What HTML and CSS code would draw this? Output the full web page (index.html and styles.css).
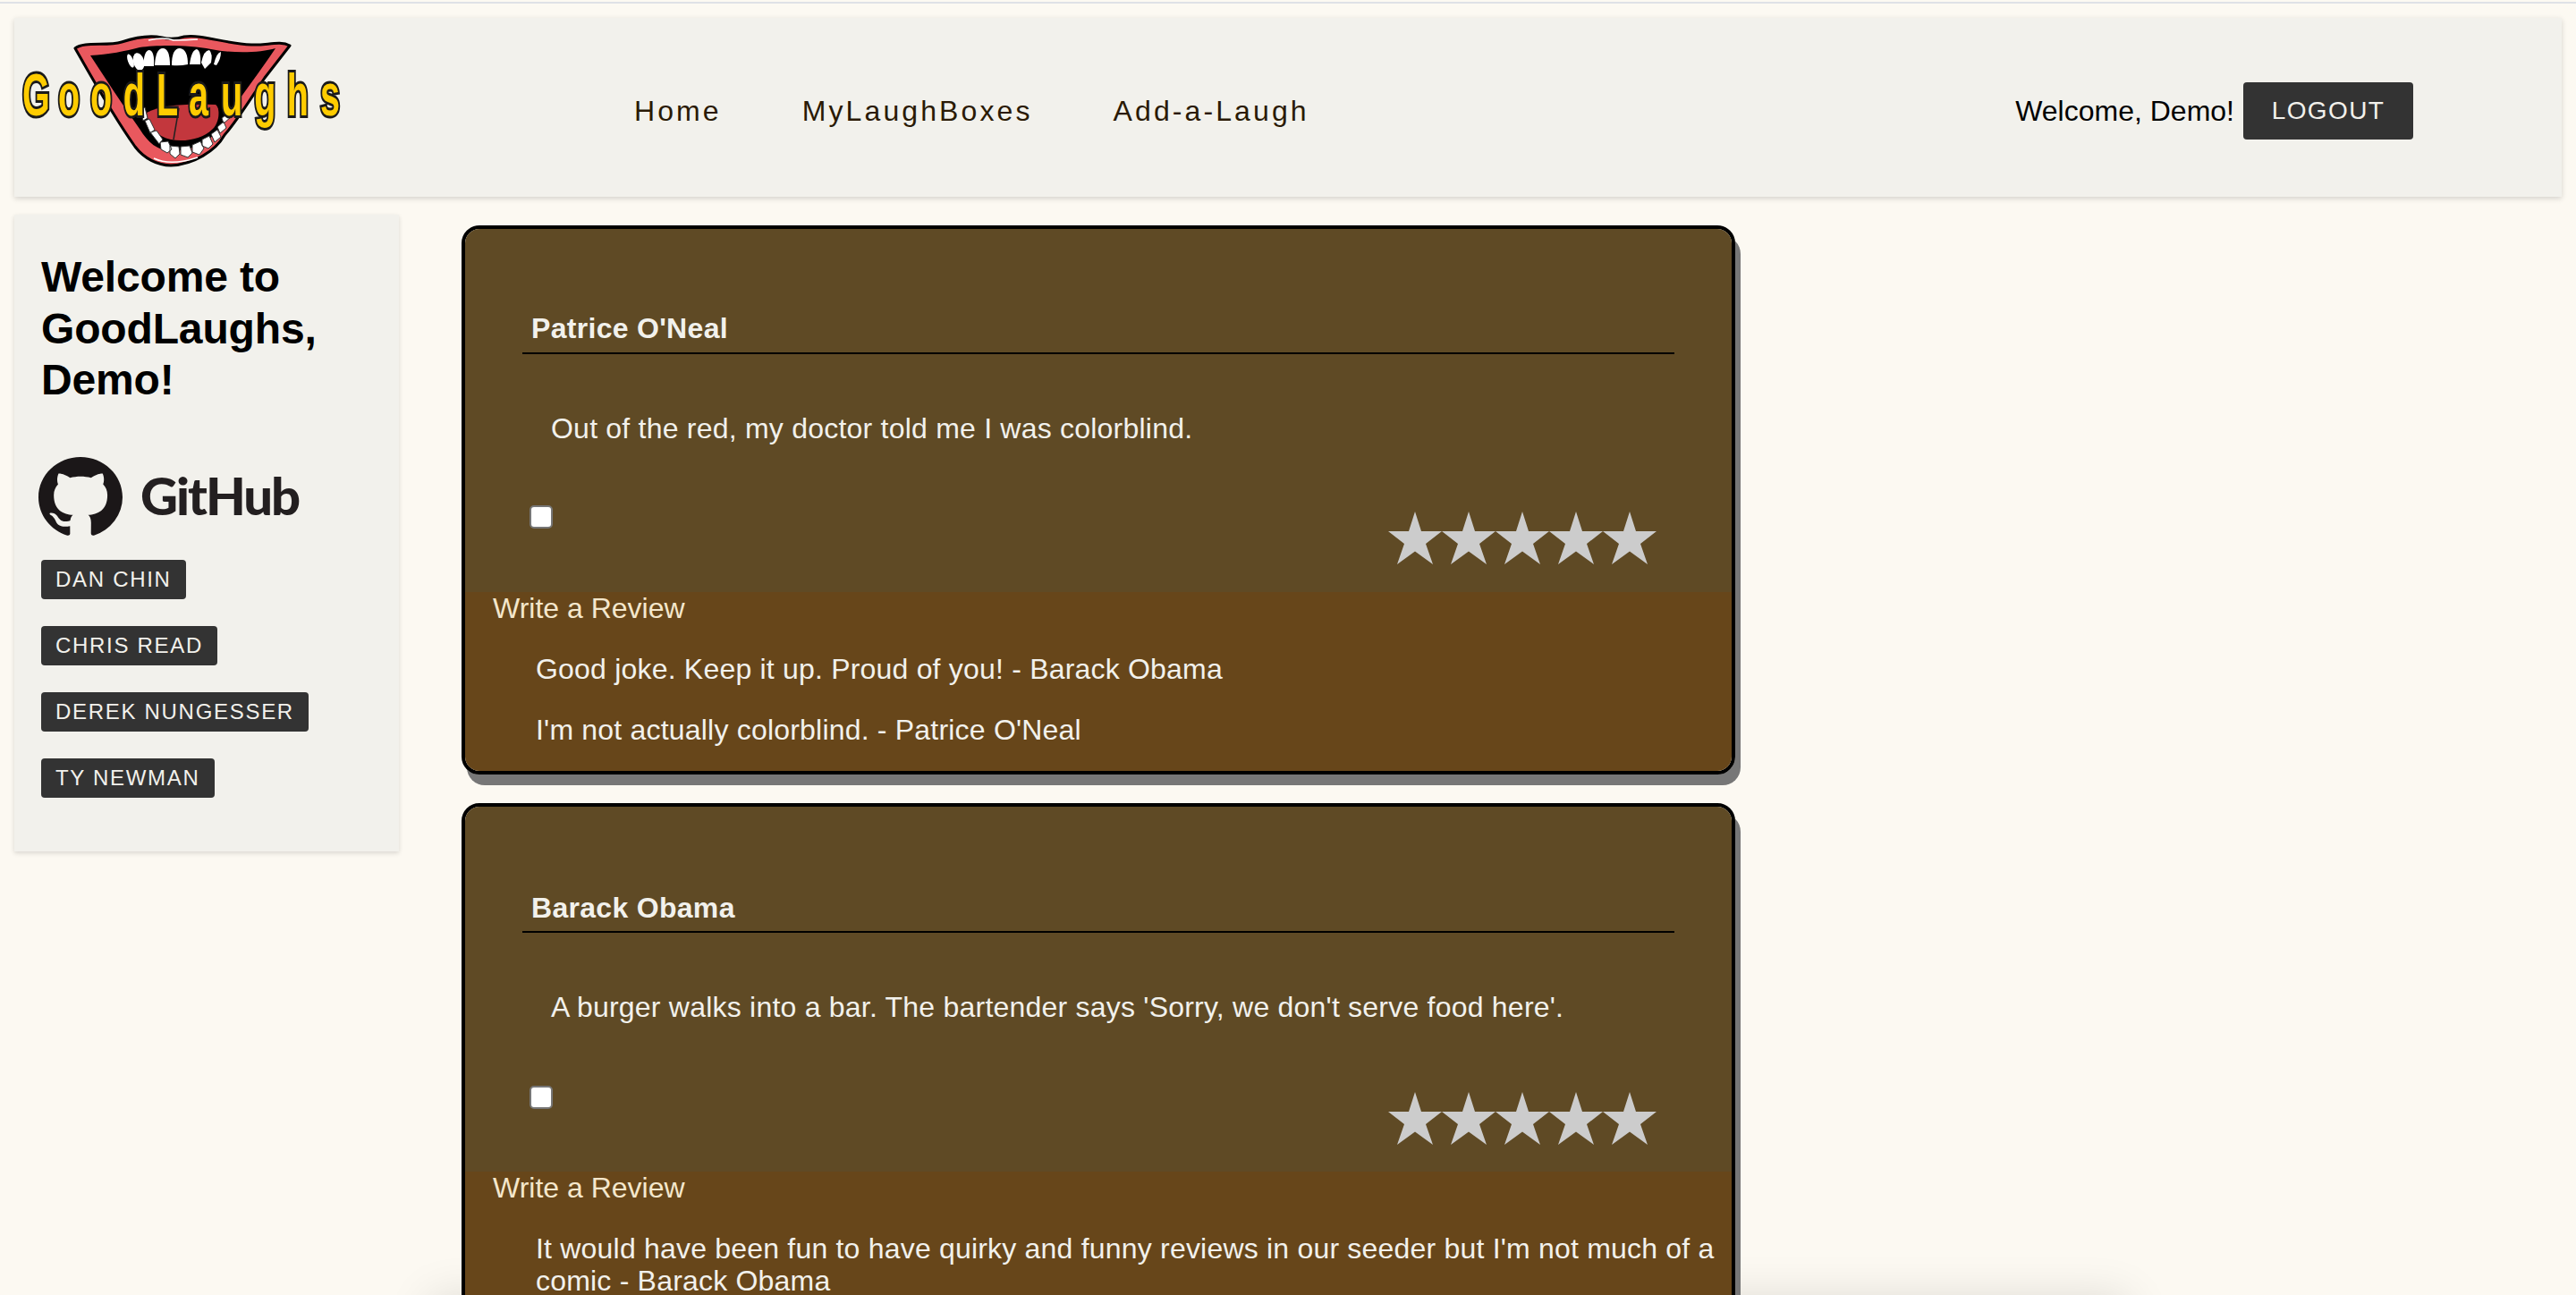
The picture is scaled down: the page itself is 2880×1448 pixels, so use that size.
FILE: index.html
```html
<!DOCTYPE html>
<html lang="en">
<head>
<meta charset="utf-8">
<title>GoodLaughs</title>
<link rel="stylesheet" href="styles.css">
</head>
<body>
<svg class="defs" width="0" height="0" aria-hidden="true">
  <defs>
    <polygon id="star" points="30,0 37,22 60,22 42,36 50,59 30,44.500 10,59 18,36 0,22 23,22"/>
  </defs>
</svg>
<div class="topline"></div>
<header class="navbar">
  <a class="logo" href="#">
    <svg class="logo-art" viewBox="0 0 400 180" width="400" height="180" aria-label="GoodLaughs">
      <path fill="#e9585e" stroke="#000" stroke-width="3" stroke-linejoin="round" d="M68 34C78 26 104 32 120 27C135 22 150 19 165 22Q177 25 190 21C210 18 235 29 265 30C282 31 297 25 308 31L280 67C265 89 250 114 235 131C225 149 200 164 175 165C160 165 145 157 135 144C110 109 85 64 68 34Z"/>
      <path fill="#000" d="M85 42C105 41 125 37 140 33C160 30 195 30 220 35C245 40 275 39 292 34C272 64 250 92 232 120C220 138 200 149 175 149C160 148 150 140 140 124C120 96 102 68 85 42Z"/>
      <g fill="#fff">
        <ellipse cx="130" cy="48" rx="3" ry="8" transform="rotate(-20 130 48)"/>
        <ellipse cx="139" cy="49" rx="6" ry="10" transform="rotate(-15 139 49)"/>
        <path d="M144 54Q145 36 151 36Q157 37 156 54Z"/>
        <path d="M157 53Q158 34 166 34Q174 34 174 53Z"/>
        <path d="M176 53Q176 34 185 34Q194 35 194 52Q185 54 176 53Z"/>
        <path d="M196 52Q198 36 204 35Q209 37 208 52Z"/>
        <path d="M209 50Q212 36 218 36Q222 40 220 50L213 57Z"/>
        <path d="M223 52Q226 39 231 38Q231 46 226 53Z"/>
      </g>
      <path fill="#c3373d" d="M148 106C165 97 190 96 225 97C230 100 230 116 222 124C210 136 190 139 175 136C160 133 150 122 148 106Z"/>
      <path fill="none" stroke="#222" stroke-width="1.500" d="M184 101L178 136"/>
      <path fill="#fff" stroke="#333" stroke-width="1" stroke-linejoin="round" d="M141 102l5-2 3 12-5 3zM146 115l5-2 6 12-5 4zM152 128l7-2 7 10-4 5zM163 139l9-1 4 9-5 4-7-4zM174 143l10 1 1 8-5 5-6-5zM186 144l10-1 3 8-5 5-8-3zM199 142l9-4 4 8-5 7-8-3zM210 136l8-4 4 9-5 5-7-3zM220 130l7-5 4 8-7 6zM227 122l7-6 3 7-7 6zM232 112l8-6 2 5-8 7zM238 104l7-4 1 5-8 5z"/>
      <path fill="none" stroke="#fff" stroke-width="1.500" d="M150 25Q168 21 178 25Q192 25 205 24M156 157Q175 166 205 156"/>
      <text class="logo-text" x="15 81.700 141.700 203 265 325 385 447 508 570" y="109" transform="scale(.6 1)">GoodLaughs</text>
    </svg>
  </a>
  <nav class="nav">
    <a class="nav-link" href="#">Home</a>
    <a class="nav-link" href="#">MyLaughBoxes</a>
    <a class="nav-link" href="#">Add-a-Laugh</a>
  </nav>
  <div class="account">
    <span class="welcome">Welcome, Demo!</span>
    <a class="btn btn-logout" href="#">LOGOUT</a>
  </div>
</header>
<div class="layout">
  <aside class="sidebar">
    <h2 class="sidebar-title">Welcome to GoodLaughs, Demo!</h2>
    <div class="github">
      <svg class="github-mark" viewBox="0 0 16 16" width="94" height="90" preserveAspectRatio="none"><path fill="#1b1718" d="M8 0C3.58 0 0 3.58 0 8c0 3.54 2.290 6.530 5.470 7.590.4.070.55-.17.55-.38 0-.19-.01-.82-.01-1.490-2.010.37-2.530-.49-2.690-.94-.09-.23-.48-.94-.82-1.130-.28-.15-.68-.52-.01-.53.63-.01 1.080.58 1.230.82.72 1.210 1.870.87 2.330.66.07-.52.28-.87.51-1.070-1.780-.2-3.640-.89-3.640-3.950 0-.87.31-1.590.82-2.150-.08-.2-.36-1.020.08-2.120 0 0 .67-.21 2.200.82.64-.18 1.320-.27 2-.27.68 0 1.360.09 2 .27 1.530-1.040 2.200-.82 2.200-.82.44 1.100.16 1.920.08 2.120.51.56.82 1.270.82 2.150 0 3.070-1.870 3.750-3.650 3.950.29.25.54.73.54 1.480 0 1.070-.01 1.930-.01 2.200 0 .21.15.46.55.38A8.013 8.013 0 0016 8c0-4.420-3.580-8-8-8z"/></svg>
      <span class="github-word">GitHub</span>
    </div>
    <ul class="team">
      <li><a class="btn btn-team" href="#">DAN CHIN</a></li>
      <li><a class="btn btn-team" href="#">CHRIS READ</a></li>
      <li><a class="btn btn-team" href="#">DEREK NUNGESSER</a></li>
      <li><a class="btn btn-team" href="#">TY NEWMAN</a></li>
    </ul>
  </aside>
  <main class="feed">
    <article class="card">
      <section class="joke">
        <h3 class="joke-author">Patrice O'Neal</h3>
        <p class="joke-text">Out of the red, my doctor told me I was colorblind.</p>
        <div class="joke-actions">
          <input class="joke-check" type="checkbox" aria-label="Add to box">
          <div class="stars">
            <svg class="star" viewBox="0 0 60 59"><use href="#star"/></svg>
            <svg class="star" viewBox="0 0 60 59"><use href="#star"/></svg>
            <svg class="star" viewBox="0 0 60 59"><use href="#star"/></svg>
            <svg class="star" viewBox="0 0 60 59"><use href="#star"/></svg>
            <svg class="star" viewBox="0 0 60 59"><use href="#star"/></svg>
          </div>
        </div>
      </section>
      <section class="reviews">
        <a class="review-link" href="#">Write a Review</a>
        <p class="review">Good joke. Keep it up. Proud of you! - Barack Obama</p>
        <p class="review">I'm not actually colorblind. - Patrice O'Neal</p>
      </section>
    </article>
    <article class="card card-second">
      <section class="joke">
        <h3 class="joke-author">Barack Obama</h3>
        <p class="joke-text">A burger walks into a bar. The bartender says 'Sorry, we don't serve food here'.</p>
        <div class="joke-actions">
          <input class="joke-check" type="checkbox" aria-label="Add to box">
          <div class="stars">
            <svg class="star" viewBox="0 0 60 59"><use href="#star"/></svg>
            <svg class="star" viewBox="0 0 60 59"><use href="#star"/></svg>
            <svg class="star" viewBox="0 0 60 59"><use href="#star"/></svg>
            <svg class="star" viewBox="0 0 60 59"><use href="#star"/></svg>
            <svg class="star" viewBox="0 0 60 59"><use href="#star"/></svg>
          </div>
        </div>
      </section>
      <section class="reviews">
        <a class="review-link" href="#">Write a Review</a>
        <p class="review">It would have been fun to have quirky and funny reviews in our seeder but I'm not much of a comic - Barack Obama</p>
      </section>
    </article>
  </main>
</div>
<div class="bottom-glow"></div>
</body>
</html>
```
FILE: styles.css
```css
* { box-sizing: border-box; }
html, body { margin: 0; height: 1448px; overflow: hidden; }
body {
  position: relative;
  background: #fcf9f2;
  font-family: "Liberation Sans", Arial, sans-serif;
  font-size: 32px;
  color: #000;
}
a { text-decoration: none; color: inherit; }
.defs { position: absolute; }
.topline { height: 2px; margin-top: 2px; background: #dfe1e6; }
.navbar {
  display: flex;
  align-items: center;
  height: 200px;
  margin: 16px 16px 0;
  padding-top: 8px;
  background: #f2f1ec;
  box-shadow: 0 2px 6px rgba(0, 0, 0, .16);
}
.logo { position: relative; flex: 0 0 693px; height: 192px; }
.logo-art { position: absolute; left: 0; top: -8px; }
.logo-text {
  fill: #ffcc00;
  stroke: #1a1a1a;
  stroke-width: 6px;
  paint-order: stroke;
  font-family: "Liberation Sans", sans-serif;
  font-weight: 700;
  font-size: 66px;
}
.nav { display: flex; gap: 90px; }
.nav-link { font-size: 32px; letter-spacing: 3.100px; color: #2a1a05; }
.account { display: flex; align-items: center; gap: 10px; margin-left: auto; margin-right: 166px; }
.welcome { font-size: 32px; }
.btn {
  display: inline-block;
  background: #333;
  color: #f2f1ec;
  border-radius: 4px;
}
.btn-logout { width: 190px; height: 64px; line-height: 64px; text-align: center; font-size: 28px; letter-spacing: 1.400px; }
.layout { display: flex; align-items: flex-start; margin-left: 16px; }
.sidebar {
  flex: 0 0 430px;
  height: 712px;
  margin-top: 20px;
  padding: 41px 30px 0;
  background: #f2f1ec;
  box-shadow: 0 2px 5px rgba(0, 0, 0, .14);
}
.sidebar-title { margin: 0; font-size: 48px; line-height: 57.600px; font-weight: 700; letter-spacing: -.15px; }
.github { display: flex; align-items: center; gap: 20px; margin: 57px 0 0 -3px; }
.github-word {
  font-family: Lato, sans-serif;
  font-weight: 900;
  font-size: 58px;
  letter-spacing: -2px;
  color: #231f20;
  line-height: 86px;
  padding-bottom: 4px;
}
.team { list-style: none; margin: 25px 0 0; padding: 0; display: flex; flex-direction: column; gap: 30px; align-items: flex-start; }
.team li { display: flex; }
.btn-team { height: 44px; line-height: 44px; padding: 0 16px; font-size: 24px; letter-spacing: 1.700px; }
.feed { margin-left: 70px; padding-top: 32px; display: flex; flex-direction: column; gap: 32px; }
.card {
  width: 1424px;
  border: 4px solid #000;
  border-radius: 20px;
  box-shadow: 6px 12px 0 #777;
  position: relative;
  z-index: 1;
}
.joke {
  height: 406px;
  padding: 94px 64px 0;
  background: #5f4a25;
  border-radius: 16px 16px 0 0;
  color: #f2f1ec;
}
.card-second .joke { height: 408px; padding-top: 95px; }
.joke-author {
  margin: 0;
  height: 46px;
  padding-left: 10px;
  font-size: 32px;
  line-height: 34px;
  font-weight: 700;
  letter-spacing: .3px;
  border-bottom: 2px solid #000;
}
.card-second .joke-author { line-height: 36px; }
.joke-text { margin: 0; padding: 65px 0 0 32px; font-size: 32px; line-height: 36px; letter-spacing: .22px; }
.joke-actions { display: flex; justify-content: space-between; align-items: flex-start; margin-top: 68px; padding: 0 20px 0 8px; }
.card-second .joke-actions { margin-top: 70px; }
.joke-check {
  appearance: none;
  width: 26px;
  height: 26px;
  margin: 0;
  background: #fff;
  border: 2px solid #767676;
  border-radius: 5px;
}
.stars { display: flex; margin-top: 7px; }
.star { width: 60px; height: 59px; fill: #ccc; display: block; }
.reviews {
  height: 200px;
  padding: 0 14px 0 31px;
  background: #67461a;
  border-radius: 0 0 16px 16px;
  color: #f2f1ec;
}
.card-second .reviews { height: 400px; }
.review-link { display: block; height: 36px; line-height: 36px; color: #f4e7cc; }
.review { margin: 32px 0 0 48px; line-height: 36px; letter-spacing: .2px; }
.bottom-glow {
  position: absolute;
  left: 500px;
  top: 1470px;
  width: 1860px;
  height: 60px;
  box-shadow: 0 0 50px 20px rgba(0, 0, 0, .12);
}
```
